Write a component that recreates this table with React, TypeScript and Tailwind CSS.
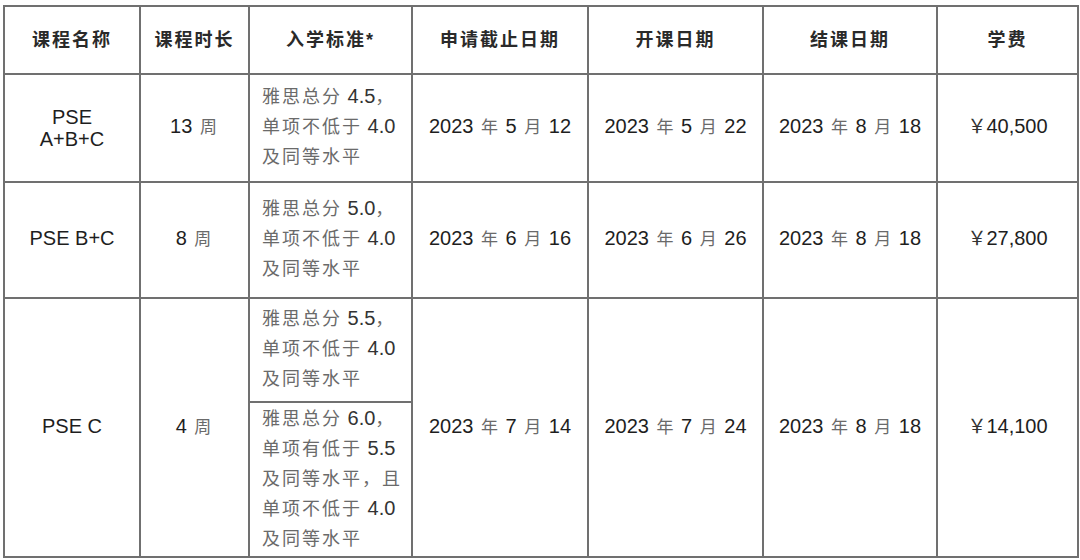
import React from "react";

const FONT = '"Liberation Sans", "Noto Sans CJK SC", sans-serif';

function Mixed({ text, cjk, latin }: { text: string; cjk: string; latin: string }) {
  const parts = text.split(/([\u3000-\u303f\u4e00-\u9fff\uff00-\uffef]+)/).filter((p) => p.length > 0);
  return (
    <>
      {parts.map((p, i) =>
        /[\u3000-\u303f\u4e00-\u9fff\uff00-\uffef]/.test(p) ? (
          <span key={i} className={cjk}>
            {p}
          </span>
        ) : (
          <span key={i} className={latin}>
            {p}
          </span>
        )
      )}
    </>
  );
}

const BODY_CJK = "text-[17px] leading-none px-[2px] text-[#6a6a6a]";
const BODY_LAT = "text-[20px] leading-none text-[#1e1e1e]";

function Body({ text }: { text: string }) {
  return <Mixed text={text} cjk={BODY_CJK} latin={BODY_LAT} />;
}

function Criteria({ lines }: { lines: string[] }) {
  return (
    <div className="flex flex-col whitespace-nowrap">
      {lines.map((l, i) => (
        <div key={i} className="h-[30px] leading-[30px] overflow-visible">
          <Mixed
            text={l}
            cjk="text-[18px] leading-none tracking-[2px] text-[#6a6a6a]"
            latin="text-[20px] leading-none text-[#333]"
          />
        </div>
      ))}
    </div>
  );
}

const td = "border-2 border-[#707070] text-center align-middle p-0 leading-[24px]";
const th = "border-2 border-[#707070] text-center align-middle p-0 text-[18px] font-bold tracking-[2px] text-[#2a2a2a]";

export default function App() {
  return (
    <div className="w-[1080px] h-[560px] bg-white pl-[3px] pt-[5px] overflow-hidden" style={{ fontFamily: FONT }}>
      <table className="table-fixed border-collapse w-[1074px]">
        <colgroup>
          <col className="w-[136px]" />
          <col className="w-[109px]" />
          <col className="w-[163px]" />
          <col className="w-[176px]" />
          <col className="w-[175px]" />
          <col className="w-[174px]" />
          <col className="w-[141px]" />
        </colgroup>
        <tbody>
          <tr className="h-[68px]">
            <td className={th}>课程名称</td>
            <td className={th}>课程时长</td>
            <td className={th}>入学标准*</td>
            <td className={th}>申请截止日期</td>
            <td className={th}>开课日期</td>
            <td className={th}>结课日期</td>
            <td className={th}>学费</td>
          </tr>
          <tr className="h-[108px]">
            <td className={td}>
              <div className="text-[20px] leading-[22px] text-[#1e1e1e]">
                PSE
                <br />
                A+B+C
              </div>
            </td>
            <td className={td}>
              <Body text="13 周" />
            </td>
            <td className={`${td} text-left pl-[12px]`}>
              <Criteria lines={["雅思总分 4.5，", "单项不低于 4.0", "及同等水平"]} />
            </td>
            <td className={td}>
              <Body text="2023 年 5 月 12" />
            </td>
            <td className={td}>
              <Body text="2023 年 5 月 22" />
            </td>
            <td className={td}>
              <Body text="2023 年 8 月 18" />
            </td>
            <td className={td}>
              <span className="text-[19px] leading-none text-[#333]">￥</span>
              <span className={BODY_LAT}>40,500</span>
            </td>
          </tr>
          <tr className="h-[116px]">
            <td className={td}>
              <span className={BODY_LAT}>PSE B+C</span>
            </td>
            <td className={td}>
              <Body text="8 周" />
            </td>
            <td className={`${td} text-left pl-[12px]`}>
              <Criteria lines={["雅思总分 5.0，", "单项不低于 4.0", "及同等水平"]} />
            </td>
            <td className={td}>
              <Body text="2023 年 6 月 16" />
            </td>
            <td className={td}>
              <Body text="2023 年 6 月 26" />
            </td>
            <td className={td}>
              <Body text="2023 年 8 月 18" />
            </td>
            <td className={td}>
              <span className="text-[19px] leading-none text-[#333]">￥</span>
              <span className={BODY_LAT}>27,800</span>
            </td>
          </tr>
          <tr className="h-[104px]">
            <td className={td} rowSpan={2}>
              <span className={BODY_LAT}>PSE C</span>
            </td>
            <td className={td} rowSpan={2}>
              <Body text="4 周" />
            </td>
            <td className={`${td} text-left pl-[12px]`}>
              <Criteria lines={["雅思总分 5.5，", "单项不低于 4.0", "及同等水平"]} />
            </td>
            <td className={td} rowSpan={2}>
              <Body text="2023 年 7 月 14" />
            </td>
            <td className={td} rowSpan={2}>
              <Body text="2023 年 7 月 24" />
            </td>
            <td className={td} rowSpan={2}>
              <Body text="2023 年 8 月 18" />
            </td>
            <td className={td} rowSpan={2}>
              <span className="text-[19px] leading-none text-[#333]">￥</span>
              <span className={BODY_LAT}>14,100</span>
            </td>
          </tr>
          <tr className="h-[155px]">
            <td className={`${td} text-left pl-[12px]`}>
              <Criteria lines={["雅思总分 6.0，", "单项有低于 5.5", "及同等水平，且", "单项不低于 4.0", "及同等水平"]} />
            </td>
          </tr>
        </tbody>
      </table>
    </div>
  );
}
